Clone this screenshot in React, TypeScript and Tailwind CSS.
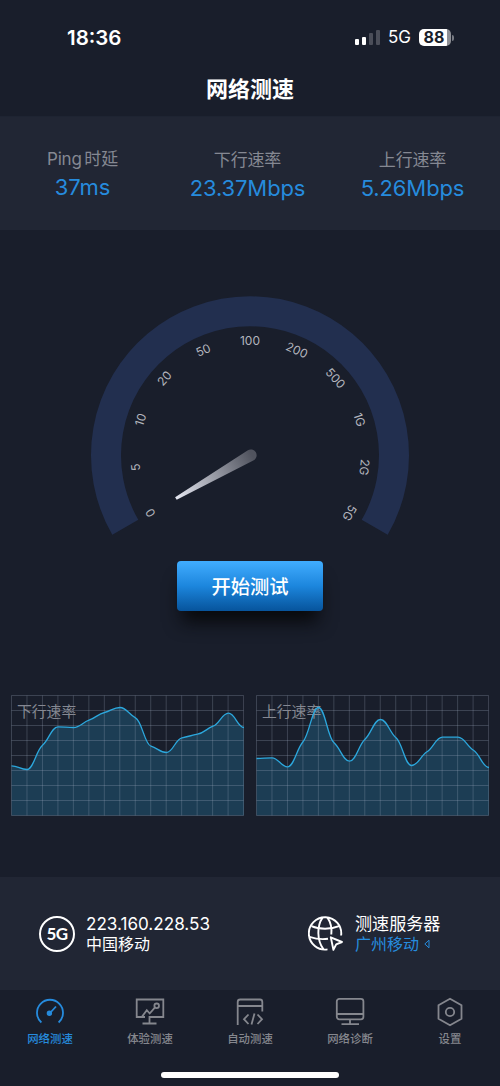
import type { ReactNode } from "react";
import { clsx } from "clsx";

const metrics = [
  { label: "Ping 时延", value: "37ms", className: "-mt-px" },
  { label: "下行速率", value: "23.37Mbps", className: "" },
  { label: "上行速率", value: "5.26Mbps", className: "" },
];

const gaugeLabels = ["0", "5", "10", "20", "50", "100", "200", "500", "1G", "2G", "5G"];

// Distance of each sample from the top of the chart
const downSamples = [70.3, 74, 49.7, 31.3, 32, 24.7, 17, 12, 22.3, 50.7, 57, 42.3, 38.7, 30.7, 17.7, 32];
const upSamples = [63, 62.3, 71.3, 46.3, 12, 47.3, 65.7, 43.7, 24, 42.3, 70, 56.3, 41.7, 41.7, 54.7, 72];

export default function App() {
  return (
    <div className="flex h-[1086px] w-[500px] flex-col overflow-hidden bg-[#191e2b] font-['Inter','Noto_Sans_CJK_SC',sans-serif] text-white">
      <StatusBar />
      <h1 className="flex h-[42px] items-center justify-center pt-[3px] text-[22px] font-bold">网络测速</h1>

      {/* Metrics */}
      <section className="mt-[7px] flex h-[114px] border-t border-[#1e2432] bg-[#212634] pt-[29px] pr-[5px]">
        {metrics.map((m) => (
          <div key={m.label} className={clsx("flex flex-1 flex-col items-center", m.className)}>
            <span className="text-[17px] leading-7 tracking-[-0.01em] text-[#858892] [word-spacing:-2px]">{m.label}</span>
            <span className="-mt-px text-[22px] leading-[30px] tracking-[-0.005em] text-[#268bdd]">{m.value}</span>
          </div>
        ))}
      </section>

      {/* Gauge and start button */}
      <main className="flex h-[647px] flex-col items-center">
        <Gauge />
        <button className="mt-[11px] h-[50px] w-[146px] shrink-0 rounded bg-gradient-to-b from-[#40adff] via-[#1c86dd] to-[#07549c] pt-[3px] text-[19.3px] font-medium shadow-[0_16px_18px_-5px_#08090c]">
          开始测试
        </button>
        <div className="mt-[84px] flex gap-3">
          <SpeedChart title="下行速率" samples={downSamples} />
          <SpeedChart title="上行速率" samples={upSamples} />
        </div>
      </main>

      {/* Connection */}
      <section className="flex h-[113px] items-center bg-[#212634]">
        <div className="flex w-[308px] items-center gap-[11px] pl-[39px]">
          <span className="flex size-9 items-center justify-center rounded-full border-2 border-white font-['Lato','Inter',sans-serif] text-[17px] font-bold tracking-[-0.03em]">
            5G
          </span>
          <div>
            <p className="text-[17.1px] leading-5">223.160.228.53</p>
            <p className="text-[16px] leading-5">中国移动</p>
          </div>
        </div>
        <div className="flex items-center gap-[11px]">
          <GlobeIcon />
          <div>
            <p className="text-[17.1px] leading-5">测速服务器</p>
            <p className="flex items-center gap-[5px] text-[16px] leading-5 text-[#268bdd]">
              广州移动
              <svg className="h-2.5 w-1.5" viewBox="0 0 6 10" fill="none" stroke="currentColor">
                <path d="M5 1.2v7.6L.8 5z" />
              </svg>
            </p>
          </div>
        </div>
      </section>

      <TabBar />
    </div>
  );
}

function StatusBar() {
  return (
    <div className="flex h-[67px] shrink-0 items-center pt-[8px] pl-[67px]">
      <span className="w-[288px] pt-px text-[20.5px] font-semibold">18:36</span>
      <svg className="-mt-px h-4 w-[26px]" viewBox="0 0 26 16">
        <rect x="0" y="10" width="4" height="6" rx="1" fill="#fff" />
        <rect x="7" y="8" width="4" height="8" rx="1" fill="#fff" />
        <rect x="14" y="4" width="4" height="12" rx="1" fill="#4b4e59" />
        <rect x="21" y="1" width="4" height="15" rx="1" fill="#4b4e59" />
      </svg>
      <span className="ml-[7px] w-[31px] pt-px text-[17px]">5G</span>
      <span className="-mt-px flex h-[17px] w-8 items-center justify-center rounded-[5px] bg-gradient-to-r from-white from-88% to-[#8d8f95] to-88% pr-[2px] text-[16px] font-bold text-[#191e2b]">
        88
      </span>
      <span className="ml-px h-[6px] w-[2px] rounded-r-full bg-[#777a82]" />
    </div>
  );
}

function Gauge() {
  return (
    <svg className="mt-[60px] h-[260px] w-[340px] shrink-0" viewBox="80 290 340 260">
      <defs>
        <linearGradient id="needle" gradientUnits="userSpaceOnUse" x1="176" y1="498" x2="252" y2="455">
          <stop offset="0" stopColor="#e4e6f0" />
          <stop offset="1" stopColor="#50535e" />
        </linearGradient>
      </defs>
      <path
        d="M125.3 527.3 A144 144 0 1 1 374.7 527.3"
        fill="none"
        stroke="#222f4f"
        strokeWidth="30"
      />
      {gaugeLabels.map((label, i) => (
        <text
          key={label}
          x="250"
          y="344.5"
          transform={`rotate(${(i - 5) * 24} 250 455.3)`}
          textAnchor="middle"
          fill="#b3b5bd"
          className="text-[12px]"
        >
          {label}
        </text>
      ))}
      <path
        d="M175.1 497.2 L247.5 450.5 A5.8 5.8 0 1 1 253.3 460.5 L176.7 499.8 Z"
        fill="url(#needle)"
      />
    </svg>
  );
}

function curve(samples: number[]) {
  const step = 15.5;
  // Flatten the tangent at every sample, fully at peaks and valleys
  const slopes = samples.map((y, i) => {
    const before = y - (samples[i - 1] ?? y);
    const after = (samples[i + 1] ?? y) - y;
    return before * after > 0 ? Math.sign(after) * Math.min(Math.abs(before), Math.abs(after)) * 0.7 : 0;
  });
  return samples.slice(1).reduce((d, y, i) => {
    const x = i * step;
    const c = 0.42;
    return `${d} C${x + step * c} ${samples[i] + slopes[i] * c} ${x + step * (1 - c)} ${y - slopes[i + 1] * c} ${x + step} ${y}`;
  }, `M0 ${samples[0]}`);
}

function SpeedChart({ title, samples }: { title: string; samples: number[] }) {
  const line = curve(samples);
  return (
    <svg className="h-[122px] w-[233px]" viewBox="-.5 -.5 233 122">
      <path d={`${line} V120 H0 Z`} fill="#1c3d54" />
      <g stroke="#a9b5c7" strokeOpacity="0.25">
        {Array.from({ length: 9 }, (_, i) => (
          <path key={i} d={`M0 ${i * 15}H232`} />
        ))}
        {Array.from({ length: 16 }, (_, i) => (
          <path key={i} d={`M${i * 15.47} 0V120`} />
        ))}
      </g>
      <text x="5.5" y="21" fill="#858892" className="text-[14.8px]">
        {title}
      </text>
      <path d={line} fill="none" stroke="#2ca7dc" strokeWidth="1.3" />
    </svg>
  );
}

function GlobeIcon() {
  return (
    <svg className="size-9" viewBox="0 0 36 36" fill="none" stroke="#fff" strokeWidth="1.9">
      <path d="M33.1 19.5A16.2 16.2 0 1 0 19.5 33.4" />
      <path d="M14.5 1.6C8.8 10 8.8 24.5 15.5 33.4M19.5 1.6C22.5 6 24 12 23.3 18.5" />
      <path d="M3.5 10.2C11 13.6 23 13.6 31 10.2M1.5 20.8C8 23 15 23.5 20 22.7" />
      <path d="M22.8 21.3 34 26 28.2 28.4 25.4 33.8Z" strokeLinejoin="round" />
    </svg>
  );
}

function TabBar() {
  return (
    <nav className="flex h-24 shrink-0 flex-col items-center">
      <div className="flex w-full pt-[6px]">
        <Tab label="网络测速" active>
          <path d="M7.4 26.5A13 13 0 1 1 24.6 26.5M22 10.5 16 17" />
          <circle cx="15.4" cy="17.2" r="1.8" fill="currentColor" />
        </Tab>
        <Tab label="体验测速">
          <path d="M11 21H2.7V3.5H29.3V21H15.5V26.7M8.5 27.5H22.5M3 21H7.7L12.8 14.2 15.7 17.5 20.8 11.7" />
          <circle cx="22.7" cy="9.8" r="2.3" />
        </Tab>
        <Tab label="自动测速">
          <path d="M3.7 29V6Q3.7 3.5 6.2 3.5H26Q28.3 3.5 28.3 6V15.5M3.7 10H28.3" />
          <path d="M14.5 18.5 10 23.2 14.5 28M23.5 18.5 28 23.2 23.5 28M20.5 17.5 17.5 28.5" />
        </Tab>
        <Tab label="网络诊断">
          <rect x="2.8" y="2.8" width="26.6" height="20.5" rx="2.5" />
          <path d="M3 18H29M16 23.5V28M7.5 28.2H25" />
        </Tab>
        <Tab label="设置">
          <path d="M16 2.7 27.5 9.2V22.8L16 29.3 4.5 22.8V9.2Z" />
          <circle cx="16" cy="16" r="4.2" />
        </Tab>
      </div>
      <div className="mt-auto mb-[8px] h-[6px] w-[178px] rounded-full bg-white" />
    </nav>
  );
}

function Tab({ label, active, children }: { label: string; active?: boolean; children: ReactNode }) {
  return (
    <div className={clsx("flex flex-1 flex-col items-center", active ? "text-[#268bdd]" : "text-[#85878e]")}>
      <svg className="size-8" viewBox="0 0 32 32" fill="none" stroke="currentColor" strokeWidth="1.8">
        {children}
      </svg>
      <span className="pt-px text-[11.4px] leading-5 font-medium">{label}</span>
    </div>
  );
}
